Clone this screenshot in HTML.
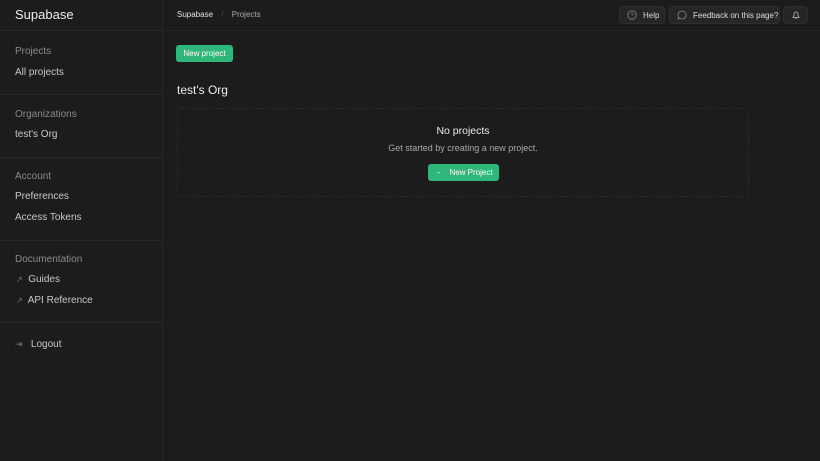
<!DOCTYPE html>
<html><head><style>
*{margin:0;padding:0;box-sizing:border-box}
body{width:820px;height:461px;background:#1c1c1c;font-family:"Liberation Sans",sans-serif;color:#ededed;position:relative;overflow:hidden}
.a{position:absolute;white-space:nowrap}
.side{position:absolute;left:0;top:0;width:163px;height:461px;border-right:1px solid #262626}
.hl{position:absolute;left:0;width:163px;height:1px;background:#282828}
.sec{color:#8a8a8a;font-size:10px}
.it{color:#c8c8c8;font-size:10px}
.btn{position:absolute;background:#262626;border:1px solid #2e2e2e;border-radius:4px;font-size:8px;color:#dcdcdc;display:flex;align-items:center;gap:6px;padding:0 0 0 7px}
.green{position:absolute;background:#2fb67a;border-radius:3px;color:#fff;font-size:8px;display:flex;align-items:center;justify-content:center}
</style></head><body>
<div class="side">
<div class="a" style="left:15px;top:7px;font-size:13px;color:#ededed">Supabase</div>
<div class="hl" style="top:30px"></div>
<div class="a sec" style="left:15px;top:46px">Projects</div>
<div class="a it" style="left:15px;top:67px">All projects</div>
<div class="hl" style="top:94px"></div>
<div class="a sec" style="left:15px;top:109px">Organizations</div>
<div class="a it" style="left:15px;top:129px">test's Org</div>
<div class="hl" style="top:157px"></div>
<div class="a sec" style="left:15px;top:171px">Account</div>
<div class="a it" style="left:15px;top:191px">Preferences</div>
<div class="a it" style="left:15px;top:212px">Access Tokens</div>
<div class="hl" style="top:240px"></div>
<div class="a sec" style="left:15px;top:254px">Documentation</div>
<div class="a it" style="left:16px;top:274px"><span style="color:#777;font-size:8px">↗</span>&nbsp; Guides</div>
<div class="a it" style="left:16px;top:295px"><span style="color:#777;font-size:8px">↗</span>&nbsp; API Reference</div>
<div class="hl" style="top:322px"></div>
<div class="a it" style="left:15px;top:339px"><span style="color:#777;font-size:9px">⇥</span>&nbsp;&nbsp; Logout</div>
</div>
<div class="a" style="left:164px;top:30px;width:656px;height:1px;background:#262626"></div>
<div class="a" style="left:177px;top:10px;font-size:8px;color:#e0e0e0">Supabase <span style="color:#555;margin:0 6px">/</span> <span style="color:#aaa">Projects</span></div>
<div class="btn" style="left:619px;top:6px;height:18px;width:46px"><svg width="10" height="10" viewBox="0 0 10 10"><circle cx="5" cy="5" r="4.2" fill="none" stroke="#888" stroke-width=".8"/><text x="5" y="7" font-size="5.5" fill="#888" text-anchor="middle" font-family="Liberation Sans">?</text></svg>Help</div>
<div class="btn" style="left:669px;top:6px;height:18px;width:111px"><svg width="10" height="10" viewBox="0 0 10 10"><path d="M5 1a4 4 0 1 1-2.5 7.1L1 9l.6-2A4 4 0 0 1 5 1z" fill="none" stroke="#888" stroke-width=".8"/></svg>Feedback on this page?</div>
<div class="btn" style="left:783px;top:6px;height:18px;width:25px;padding:0;justify-content:center"><svg width="10" height="10" viewBox="0 0 10 10"><path d="M2 7.5h6l-1-1.5V4a2 2 0 0 0-4 0v2zM4.2 8.6h1.6" fill="none" stroke="#bbb" stroke-width=".8"/></svg></div>
<div class="green" style="left:176px;top:45px;width:57px;height:17px">New project</div>
<div class="a" style="left:177px;top:83px;font-size:12px;color:#ededed">test's Org</div>
<div class="a" style="left:177px;top:108px;width:572px;height:89px;border:1px dashed #2c2c2c;border-radius:4px"></div>
<div class="a" style="left:177px;top:125px;width:572px;text-align:center;font-size:10.5px;color:#ededed">No projects</div>
<div class="a" style="left:177px;top:143px;width:572px;text-align:center;font-size:9px;color:#a8a8a8">Get started by creating a new project.</div>
<div class="green" style="left:428px;top:164px;width:71px;height:17px"><span style="font-size:7px;margin-right:8px">→</span>New Project</div>
</body></html>
